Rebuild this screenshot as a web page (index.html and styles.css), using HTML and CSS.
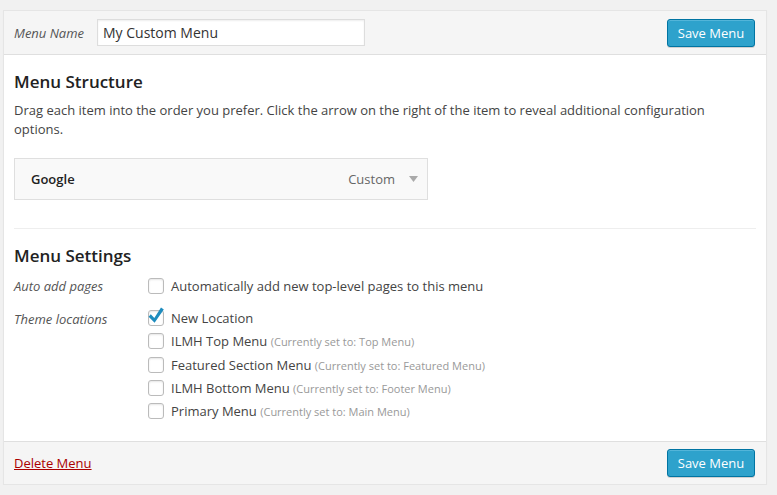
FILE: index.html
```html
<!DOCTYPE html>
<html>
<head>
<meta charset="utf-8">
<link rel="stylesheet" href="styles.css">
</head>
<body>
<div class="wrap">
  <div class="panel">
    <div class="header">
      <div class="name-group">
        <label class="name-label">Menu Name</label>
        <input class="name-input" type="text" value="My Custom Menu">
      </div>
      <button class="btn-primary">Save Menu</button>
    </div>
    <div class="body">
      <h3 class="heading">Menu Structure</h3>
      <p class="desc">Drag each item into the order you prefer. Click the arrow on the right of the item to reveal additional configuration options.</p>
      <div class="item">
        <span class="item-title">Google</span>
        <span class="item-controls">
          <span class="item-type">Custom</span>
          <svg class="item-arrow" width="9" height="6" viewBox="0 0 9 6"><path d="M0 0 H9 L4.5 6 Z" fill="#aaa"/></svg>
        </span>
      </div>
      <div class="separator"></div>
      <h3 class="heading">Menu Settings</h3>
      <div class="settings">
        <div class="set-label">Auto add pages</div>
        <div class="set-options auto-options">
          <div class="opt"><span class="cb"></span><span>Automatically add new top-level pages to this menu</span></div>
        </div>
        <div class="set-label loc-label">Theme locations</div>
        <div class="set-options loc-options">
          <div class="opt"><span class="cb checked"><svg class="check" width="20" height="20" viewBox="0 0 20 20"><path d="M15 2.6 L8.3 13 L4.8 9.3 L2.6 11.7 L8.6 17.8 L17.8 4.6 Z" fill="#1e8cbe"/></svg></span><span>New Location</span></div>
          <div class="opt"><span class="cb"></span><span>ILMH Top Menu <small class="note">(Currently set to: Top Menu)</small></span></div>
          <div class="opt"><span class="cb"></span><span>Featured Section Menu <small class="note">(Currently set to: Featured Menu)</small></span></div>
          <div class="opt"><span class="cb"></span><span>ILMH Bottom Menu <small class="note">(Currently set to: Footer Menu)</small></span></div>
          <div class="opt"><span class="cb"></span><span>Primary Menu <small class="note">(Currently set to: Main Menu)</small></span></div>
        </div>
      </div>
    </div>
    <div class="footer">
      <a class="delete" href="#">Delete Menu</a>
      <button class="btn-primary">Save Menu</button>
    </div>
  </div>
</div>
</body>
</html>
```
FILE: styles.css
```css
html, body {
  margin: 0;
  padding: 0;
  background: #f1f1f1;
}
body {
  font-family: "Open Sans", "Noto Sans", sans-serif;
  font-size: 13px;
  color: #444;
}
.wrap {
  padding: 10px 10px 0 3px;
}
.panel {
  width: 762px;
  background: #fff;
  border: 1px solid #e5e5e5;
  box-shadow: 0 1px 1px rgba(0,0,0,.04);
}
.header, .footer {
  background: #f5f5f5;
  display: flex;
  align-items: center;
  justify-content: space-between;
  padding: 0 11px 0 10px;
  box-sizing: border-box;
}
.header {
  border-bottom: 1px solid #dfdfdf;
  height: 44px;
}
.footer {
  border-top: 1px solid #dfdfdf;
  height: 43px;
}
.name-group {
  display: flex;
  align-items: center;
}
.name-label {
  font-style: italic;
  color: #555;
  font-size: 13px;
  margin-right: 13px;
}
.name-input {
  width: 268px;
  height: 27px;
  box-sizing: border-box;
  border: 1px solid #ddd;
  box-shadow: inset 0 1px 2px rgba(0,0,0,.07);
  font-family: "Open Sans", "Noto Sans", sans-serif;
  font-size: 14px;
  color: #333;
  padding: 0 5px;
  margin: 0;
  outline: none;
}
.btn-primary {
  height: 28px;
  width: 88px;
  box-sizing: border-box;
  background: #2ea2cc;
  border: 1px solid #0074a2;
  border-radius: 3px;
  box-shadow: inset 0 1px 0 rgba(120,200,230,.5), 0 1px 0 rgba(0,0,0,.15);
  color: #fff;
  font-family: "Open Sans", "Noto Sans", sans-serif;
  font-size: 13px;
  padding: 0;
  line-height: 26px;
}
.body {
  padding: 15px 10px 19px 10px;
}
.heading {
  margin: 0;
  font-size: 17px;
  font-weight: 600;
  color: #222;
  line-height: 24px;
}
.desc {
  margin: 7px 0 0 0;
  line-height: 19px;
  width: 700px;
}
.item {
  margin-top: 19px;
  width: 414px;
  height: 42px;
  box-sizing: border-box;
  border: 1px solid #dfdfdf;
  background: #f9f9f9;
  display: flex;
  align-items: center;
  justify-content: space-between;
  padding: 0 9px 0 16px;
}
.item-title {
  font-weight: 600;
  color: #222;
}
.item-controls {
  display: flex;
  align-items: center;
}
.item-type {
  color: #666;
  margin-right: 14px;
}
.item-arrow {
  display: block;
}
.separator {
  margin: 28px 0 15px;
  border-top: 1px solid #eee;
}
.settings {
  display: grid;
  grid-template-columns: 134px 1fr;
  margin-top: 7px;
}
.set-label {
  font-style: italic;
  color: #555;
  line-height: 22px;
}
.loc-label {
  margin-top: 11px;
}
.loc-options {
  margin-top: 11px;
}
.opt {
  display: flex;
  align-items: center;
  height: 23px;
}
.auto-options .opt {
  height: 22px;
}
.loc-options .opt:first-child {
  height: 20px;
}
.loc-options .opt:nth-child(2) {
  height: 25px;
}
.cb {
  position: relative;
  width: 16px;
  height: 16px;
  box-sizing: border-box;
  border: 1px solid #bbb;
  border-radius: 3px;
  background: #fff;
  box-shadow: inset 0 1px 2px rgba(0,0,0,.1);
  margin-right: 7px;
  flex: none;
}
.check {
  position: absolute;
  left: -3px;
  top: -6px;
}
.note {
  font-size: 11px;
  color: #999;
}
.delete {
  color: #a00;
  text-decoration: underline;
}
```
